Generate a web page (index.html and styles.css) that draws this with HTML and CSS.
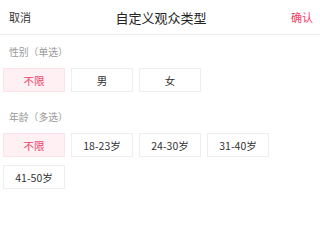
FILE: index.html
```html
<!DOCTYPE html>
<html lang="zh">
<head>
<meta charset="utf-8">
<link rel="stylesheet" href="styles.css">
</head>
<body>
<div class="header">
  <span class="cancel">取消</span>
  <span class="title">自定义观众类型</span>
  <span class="confirm">确认</span>
</div>
<div class="section">
  <div class="label">性别（单选）</div>
  <div class="options">
    <div class="opt active">不限</div>
    <div class="opt">男</div>
    <div class="opt">女</div>
  </div>
</div>
<div class="section second">
  <div class="label">年龄（多选）</div>
  <div class="options">
    <div class="opt active">不限</div>
    <div class="opt">18-23岁</div>
    <div class="opt">24-30岁</div>
    <div class="opt">31-40岁</div>
    <div class="opt">41-50岁</div>
  </div>
</div>
</body>
</html>
```
FILE: styles.css
```css
html, body {
  margin: 0;
  padding: 0;
  background: #fff;
  font-family: "Noto Sans CJK SC", "Noto Sans", sans-serif;
  color: #333;
}
.header {
  height: 34px;
  border-bottom: 1px solid #eeeeee;
  display: flex;
  align-items: center;
  justify-content: space-between;
  padding: 0 7px 0 9px;
}
.cancel {
  font-size: 11px;
  color: #333;
}
.title {
  font-size: 13px;
  color: #222;
}
.confirm {
  font-size: 11px;
  color: #f0416a;
}
.section {
  padding: 0 0 0 3px;
}
.section.second {
  margin-top: 8px;
}
.label {
  font-size: 9.8px;
  color: #999;
  padding: 10px 0 0 6px;
  height: 22px;
  line-height: 14px;
}
.options {
  display: grid;
  grid-template-columns: repeat(4, 62px);
  column-gap: 6px;
  row-gap: 8px;
  padding-top: 1px;
}
.opt {
  height: 22px;
  border: 1px solid #eeeeee;
  display: flex;
  align-items: center;
  justify-content: center;
  font-size: 10.5px;
  color: #333;
}
.opt.active {
  background: #fff0f3;
  border-color: #fde3e9;
  color: #f0416a;
}
```
